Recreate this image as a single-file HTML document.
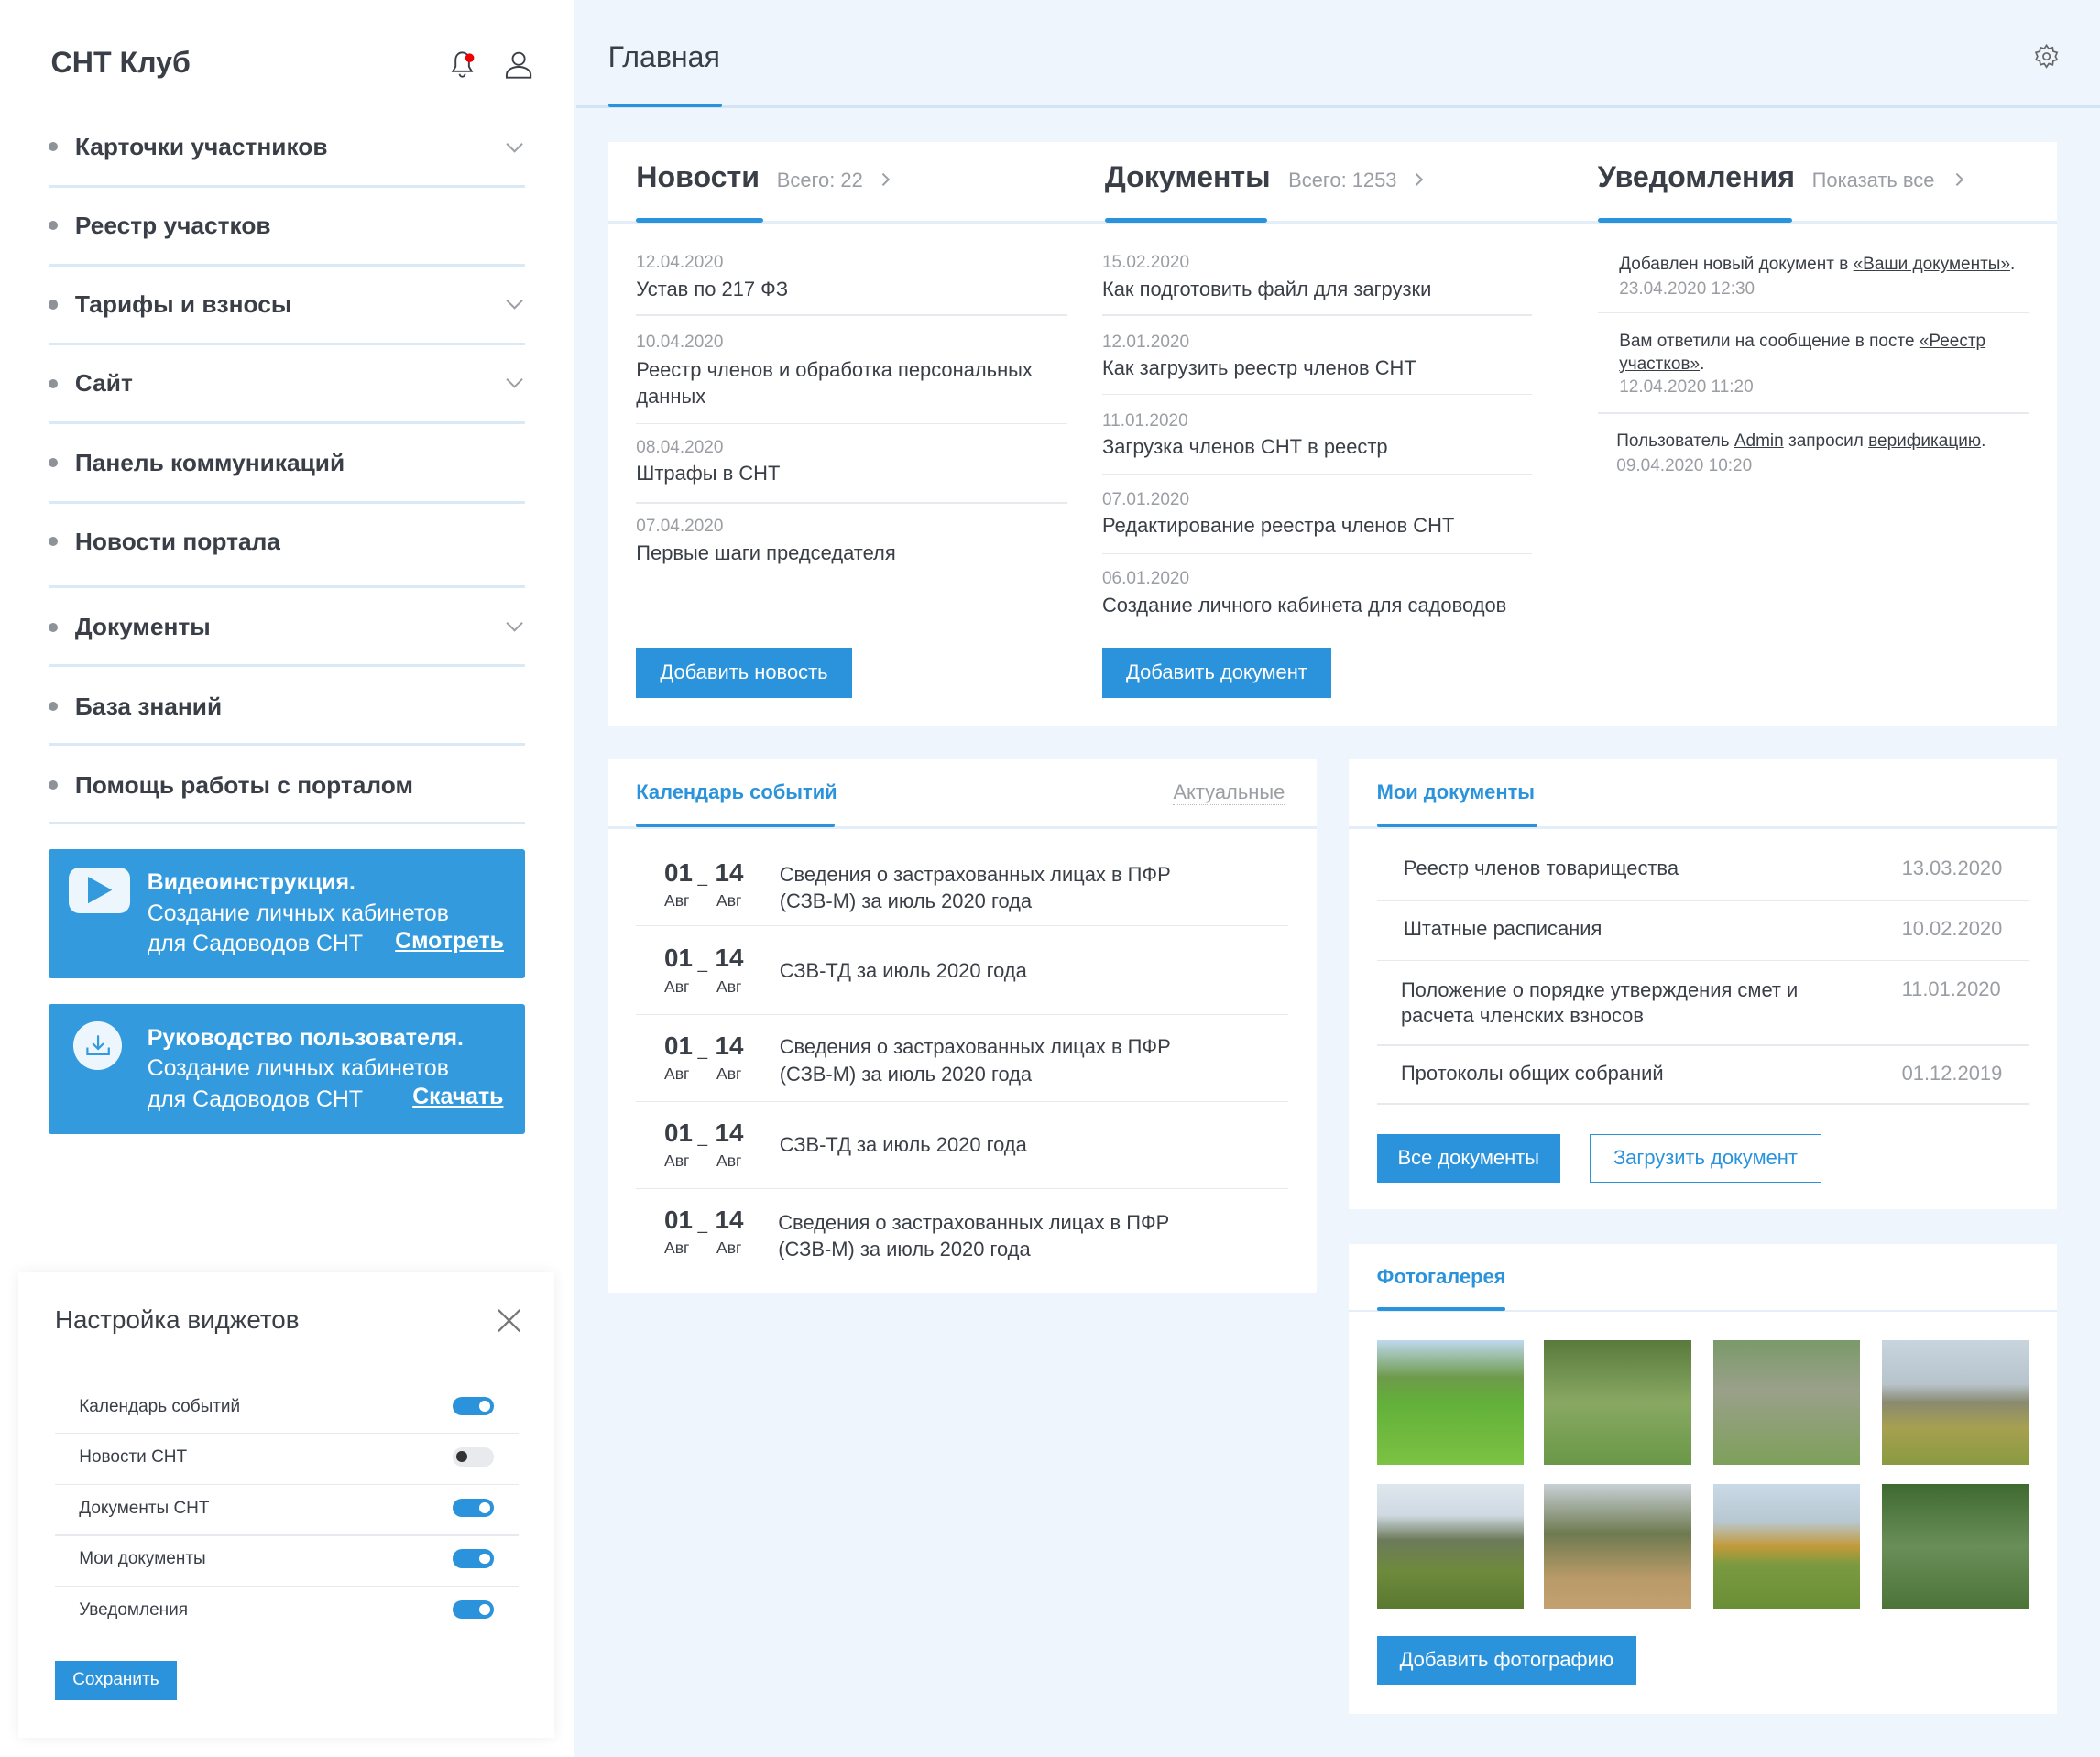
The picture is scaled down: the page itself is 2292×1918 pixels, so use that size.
<!DOCTYPE html>
<html><head><meta charset="utf-8"><style>
*{margin:0;padding:0;box-sizing:border-box}
html,body{width:2292px;height:1918px;overflow:hidden;background:#eef5fc}
#w{zoom:1.4617;width:1568px;height:1312px;position:relative;font-family:"Liberation Sans",sans-serif;color:#3a3f47}
.a{position:absolute}
.t{position:absolute;white-space:nowrap}
.card{position:absolute;background:#fff}
.hl{position:absolute;height:1px;background:#e6eaee}
.bl{position:absolute;height:2px;background:#d9e9f6}
.ul{position:absolute;height:3px;background:#2b93db;border-radius:2px}
.btn{position:absolute;background:#2b93db;color:#fff;font-size:15px;display:flex;align-items:center;justify-content:center}
.d{font-size:13px;color:#9a9ea3}
.ti{font-size:15px;color:#3a3f47}
.mi{font-size:18px;font-weight:bold;color:#3a3f47}
.dot{position:absolute;width:7px;height:7px;border-radius:50%;background:#8e9299}
.chev{position:absolute;width:9px;height:9px;border-right:1.5px solid #9aa0a6;border-bottom:1.5px solid #9aa0a6;transform:rotate(45deg)}
.gr{position:absolute;width:7px;height:7px;border-right:1.5px solid #9aa0a6;border-top:1.5px solid #9aa0a6;transform:rotate(45deg)}
.tg{position:absolute;width:31px;height:14px;border-radius:7px;background:#2b93db}
.tg::after{content:"";position:absolute;right:3px;top:3px;width:8px;height:8px;border-radius:50%;background:#fff}
.tg.off{background:#e8eaed}
.tg.off::after{left:3px;right:auto;background:#333}
u{text-decoration:underline}
.ph{position:absolute;width:110px;height:93px}
</style></head><body><div id="w">
<!-- sidebar -->
<div class="a" style="left:0;top:0;width:428px;height:1312px;background:#fff"></div>
<div class="t" style="left:38px;top:34px;font-size:22px;font-weight:bold">СНТ Клуб</div>
<svg class="a" style="left:333px;top:36px" width="24" height="24" viewBox="0 0 24 24"><path d="M12 3c-3 0-5 2.5-5 5.5v5L5 17h14l-2-3.5v-5C17 5.5 15 3 12 3zM10 19a2 2 0 0 0 4 0" fill="none" stroke="#3a3f47" stroke-width="1.3"/><circle cx="17.5" cy="7" r="3.3" fill="#e00"/></svg>
<svg class="a" style="left:376px;top:37px" width="22" height="22" viewBox="0 0 22 22"><circle cx="11" cy="7" r="4.5" fill="none" stroke="#3a3f47" stroke-width="1.3"/><path d="M2 21v-2c0-3.5 4-6 9-6s9 2.5 9 6v2z" fill="none" stroke="#3a3f47" stroke-width="1.3"/></svg>

<div class="dot" style="left:36px;top:106px"></div><div class="t mi" style="left:56px;top:99px">Карточки участников</div><div class="chev" style="left:380px;top:103px"></div><div class="bl" style="left:36px;top:138px;width:356px"></div>
<div class="dot" style="left:36px;top:165px"></div><div class="t mi" style="left:56px;top:158px">Реестр участков</div><div class="bl" style="left:36px;top:197px;width:356px"></div>
<div class="dot" style="left:36px;top:224px"></div><div class="t mi" style="left:56px;top:217px">Тарифы и взносы</div><div class="chev" style="left:380px;top:220px"></div><div class="bl" style="left:36px;top:256px;width:356px"></div>
<div class="dot" style="left:36px;top:283px"></div><div class="t mi" style="left:56px;top:276px">Сайт</div><div class="chev" style="left:380px;top:279px"></div><div class="bl" style="left:36px;top:315px;width:356px"></div>
<div class="dot" style="left:36px;top:342px"></div><div class="t mi" style="left:56px;top:335px">Панель коммуникаций</div><div class="bl" style="left:36px;top:374px;width:356px"></div>
<div class="dot" style="left:36px;top:401px"></div><div class="t mi" style="left:56px;top:394px">Новости портала</div><div class="bl" style="left:36px;top:437px;width:356px"></div>
<div class="dot" style="left:36px;top:465px"></div><div class="t mi" style="left:56px;top:458px">Документы</div><div class="chev" style="left:380px;top:461px"></div><div class="bl" style="left:36px;top:496px;width:356px"></div>
<div class="dot" style="left:36px;top:524px"></div><div class="t mi" style="left:56px;top:517px">База знаний</div><div class="bl" style="left:36px;top:555px;width:356px"></div>
<div class="dot" style="left:36px;top:583px"></div><div class="t mi" style="left:56px;top:576px">Помощь работы с порталом</div><div class="bl" style="left:36px;top:614px;width:356px"></div>

<div class="a" style="left:36px;top:634px;width:356px;height:97px;background:#339ade;border-radius:2px"></div>
<div class="a" style="left:51px;top:648px;width:46px;height:34px;background:#eef6fd;border-radius:8px"></div>
<svg class="a" style="left:66px;top:655px" width="18" height="20"><path d="M0 0L18 10L0 20z" fill="#339ade"/></svg>
<div class="t" style="left:110px;top:648px;color:#fff;font-size:17px;line-height:23px"><b>Видеоинструкция.</b><br>Создание личных кабинетов<br>для Садоводов СНТ</div>
<div class="t" style="left:295px;top:694px;color:#fff;font-size:17px;font-weight:bold"><u>Смотреть</u></div>

<div class="a" style="left:36px;top:750px;width:356px;height:97px;background:#339ade;border-radius:2px"></div>
<div class="a" style="left:55px;top:763px;width:36px;height:36px;background:#eef6fd;border-radius:50%"></div>
<svg class="a" style="left:62px;top:770px" width="22" height="22" viewBox="0 0 22 22" fill="none" stroke="#339ade" stroke-width="1.5"><path d="M11 3v10M7 9l4 4 4-4M3 12v5h16v-5"/></svg>
<div class="t" style="left:110px;top:764px;color:#fff;font-size:17px;line-height:23px"><b>Руководство пользователя.</b><br>Создание личных кабинетов<br>для Садоводов СНТ</div>
<div class="t" style="left:308px;top:810px;color:#fff;font-size:17px;font-weight:bold"><u>Скачать</u></div>

<!-- widget panel -->
<div class="a" style="left:14px;top:950px;width:400px;height:348px;background:#fff;box-shadow:0 0 10px rgba(0,0,0,.07)"></div>
<div class="t" style="left:41px;top:975px;font-size:19px">Настройка виджетов</div>
<svg class="a" style="left:370px;top:976px" width="20" height="20"><path d="M2 2L18 18M18 2L2 18" stroke="#777" stroke-width="1.5"/></svg>
<div class="t" style="left:59px;top:1043px;font-size:13px">Календарь событий</div><div class="tg" style="left:338px;top:1043px"></div><div class="hl" style="left:41px;top:1070px;width:346px"></div>
<div class="t" style="left:59px;top:1081px;font-size:13px">Новости СНТ</div><div class="tg off" style="left:338px;top:1081px"></div><div class="hl" style="left:41px;top:1108px;width:346px"></div>
<div class="t" style="left:59px;top:1119px;font-size:13px">Документы СНТ</div><div class="tg" style="left:338px;top:1119px"></div><div class="hl" style="left:41px;top:1146px;width:346px"></div>
<div class="t" style="left:59px;top:1157px;font-size:13px">Мои документы</div><div class="tg" style="left:338px;top:1157px"></div><div class="hl" style="left:41px;top:1184px;width:346px"></div>
<div class="t" style="left:59px;top:1195px;font-size:13px">Уведомления</div><div class="tg" style="left:338px;top:1195px"></div>
<div class="btn" style="left:41px;top:1240px;width:91px;height:30px;font-size:13px">Сохранить</div>

<!-- main header -->
<div class="t" style="left:454px;top:30px;font-size:22px">Главная</div>
<div class="a" style="left:430px;top:79px;width:1138px;height:2px;background:#d3e5f5"></div>
<div class="ul" style="left:454px;top:77px;width:85px"></div>
<svg class="a" style="left:1518px;top:32px" width="20" height="20" viewBox="0 0 24 24" fill="none" stroke="#666" stroke-width="1.4"><circle cx="12" cy="12" r="3"/><path d="M12 2l2 3 3.5-1 .5 3.5 3.5 1-1.5 3.5 1.5 3-3.5 1-.5 3.5-3.5-1-2 3-2-3-3.5 1-.5-3.5-3.5-1 1.5-3-1.5-3.5 3.5-1 .5-3.5 3.5 1z"/></svg>

<!-- card 1 -->
<div class="card" style="left:454px;top:106px;width:1082px;height:436px"></div>
<div class="a" style="left:454px;top:165px;width:1082px;height:2px;background:#e3eef8"></div>
<div class="t" style="left:475px;top:120px;font-size:22px;font-weight:bold">Новости</div>
<div class="t" style="left:580px;top:126px;font-size:15px;color:#9a9ea3">Всего: 22</div><div class="gr" style="left:656px;top:131px"></div>
<div class="ul" style="left:475px;top:163px;width:95px"></div>
<div class="t" style="left:825px;top:120px;font-size:22px;font-weight:bold">Документы</div>
<div class="t" style="left:962px;top:126px;font-size:15px;color:#9a9ea3">Всего: 1253</div><div class="gr" style="left:1054px;top:131px"></div>
<div class="ul" style="left:825px;top:163px;width:121px"></div>
<div class="t" style="left:1193px;top:120px;font-size:22px;font-weight:bold">Уведомления</div>
<div class="t" style="left:1353px;top:126px;font-size:15px;color:#9a9ea3">Показать все</div><div class="gr" style="left:1458px;top:131px"></div>
<div class="ul" style="left:1193px;top:163px;width:145px"></div>

<div class="t d" style="left:475px;top:189px">12.04.2020</div><div class="t ti" style="left:475px;top:207px">Устав по 217 ФЗ</div><div class="hl" style="left:475px;top:235px;width:322px"></div>
<div class="t d" style="left:475px;top:248px">10.04.2020</div><div class="t ti" style="left:475px;top:266px;line-height:20px">Реестр членов и обработка персональных<br>данных</div><div class="hl" style="left:475px;top:316px;width:322px"></div>
<div class="t d" style="left:475px;top:327px">08.04.2020</div><div class="t ti" style="left:475px;top:345px">Штрафы в СНТ</div><div class="hl" style="left:475px;top:375px;width:322px"></div>
<div class="t d" style="left:475px;top:386px">07.04.2020</div><div class="t ti" style="left:475px;top:404px">Первые шаги председателя</div>

<div class="t d" style="left:823px;top:189px">15.02.2020</div><div class="t ti" style="left:823px;top:207px">Как подготовить файл для загрузки</div><div class="hl" style="left:823px;top:235px;width:321px"></div>
<div class="t d" style="left:823px;top:248px">12.01.2020</div><div class="t ti" style="left:823px;top:266px">Как загрузить реестр членов СНТ</div><div class="hl" style="left:823px;top:294px;width:321px"></div>
<div class="t d" style="left:823px;top:307px">11.01.2020</div><div class="t ti" style="left:823px;top:325px">Загрузка членов СНТ в реестр</div><div class="hl" style="left:823px;top:354px;width:321px"></div>
<div class="t d" style="left:823px;top:366px">07.01.2020</div><div class="t ti" style="left:823px;top:384px">Редактирование реестра членов СНТ</div><div class="hl" style="left:823px;top:413px;width:321px"></div>
<div class="t d" style="left:823px;top:425px">06.01.2020</div><div class="t ti" style="left:823px;top:443px">Создание личного кабинета для садоводов</div>

<div class="t" style="left:1209px;top:189px;font-size:13px;line-height:18px">Добавлен новый документ в <u>«Ваши документы»</u>.<br><span style="color:#9a9ea3">23.04.2020 12:30</span></div><div class="hl" style="left:1193px;top:233px;width:322px"></div>
<div class="t" style="left:1209px;top:247px;font-size:13px;line-height:17px">Вам ответили на сообщение в посте <u>«Реестр</u><br><u>участков»</u>.<br><span style="color:#9a9ea3">12.04.2020 11:20</span></div><div class="hl" style="left:1193px;top:308px;width:322px"></div>
<div class="t" style="left:1207px;top:321px;font-size:13px;line-height:18px">Пользователь <u>Admin</u> запросил <u>верификацию</u>.<br><span style="color:#9a9ea3">09.04.2020 10:20</span></div>

<div class="btn" style="left:475px;top:484px;width:161px;height:37px">Добавить новость</div>
<div class="btn" style="left:823px;top:484px;width:171px;height:37px">Добавить документ</div>

<!-- calendar -->
<div class="card" style="left:454px;top:567px;width:529px;height:398px"></div>
<div class="a" style="left:454px;top:617px;width:529px;height:2px;background:#e3eef8"></div>
<div class="t" style="left:475px;top:583px;font-size:15px;color:#2b93db;font-weight:bold">Календарь событий</div>
<div class="ul" style="left:475px;top:615px;width:148px"></div>
<div class="t" style="left:876px;top:583px;font-size:15px;color:#9a9ea3;border-bottom:1px dotted #bbb">Актуальные</div>

<div class="t" style="left:496px;top:641px;font-size:19px;font-weight:bold">01</div><div class="t" style="left:534px;top:641px;font-size:19px;font-weight:bold">14</div><div class="t" style="left:521px;top:648px;font-size:13px">_</div><div class="t" style="left:496px;top:666px;font-size:12px">Авг</div><div class="t" style="left:535px;top:666px;font-size:12px">Авг</div>
<div class="t ti" style="left:582px;top:643px;line-height:20px">Сведения о застрахованных лицах в ПФР<br>(СЗВ-М) за июль 2020 года</div><div class="hl" style="left:475px;top:691px;width:487px"></div>
<div class="t" style="left:496px;top:705px;font-size:19px;font-weight:bold">01</div><div class="t" style="left:534px;top:705px;font-size:19px;font-weight:bold">14</div><div class="t" style="left:521px;top:712px;font-size:13px">_</div><div class="t" style="left:496px;top:730px;font-size:12px">Авг</div><div class="t" style="left:535px;top:730px;font-size:12px">Авг</div>
<div class="t ti" style="left:582px;top:716px">СЗВ-ТД за июль 2020 года</div><div class="hl" style="left:475px;top:757px;width:487px"></div>
<div class="t" style="left:496px;top:770px;font-size:19px;font-weight:bold">01</div><div class="t" style="left:534px;top:770px;font-size:19px;font-weight:bold">14</div><div class="t" style="left:521px;top:777px;font-size:13px">_</div><div class="t" style="left:496px;top:795px;font-size:12px">Авг</div><div class="t" style="left:535px;top:795px;font-size:12px">Авг</div>
<div class="t ti" style="left:582px;top:772px;line-height:20px">Сведения о застрахованных лицах в ПФР<br>(СЗВ-М) за июль 2020 года</div><div class="hl" style="left:475px;top:822px;width:487px"></div>
<div class="t" style="left:496px;top:835px;font-size:19px;font-weight:bold">01</div><div class="t" style="left:534px;top:835px;font-size:19px;font-weight:bold">14</div><div class="t" style="left:521px;top:842px;font-size:13px">_</div><div class="t" style="left:496px;top:860px;font-size:12px">Авг</div><div class="t" style="left:535px;top:860px;font-size:12px">Авг</div>
<div class="t ti" style="left:582px;top:846px">СЗВ-ТД за июль 2020 года</div><div class="hl" style="left:475px;top:887px;width:487px"></div>
<div class="t" style="left:496px;top:900px;font-size:19px;font-weight:bold">01</div><div class="t" style="left:534px;top:900px;font-size:19px;font-weight:bold">14</div><div class="t" style="left:521px;top:907px;font-size:13px">_</div><div class="t" style="left:496px;top:925px;font-size:12px">Авг</div><div class="t" style="left:535px;top:925px;font-size:12px">Авг</div>
<div class="t ti" style="left:581px;top:903px;line-height:20px">Сведения о застрахованных лицах в ПФР<br>(СЗВ-М) за июль 2020 года</div>

<!-- my docs -->
<div class="card" style="left:1007px;top:567px;width:529px;height:336px"></div>
<div class="a" style="left:1007px;top:617px;width:529px;height:2px;background:#e3eef8"></div>
<div class="t" style="left:1028px;top:583px;font-size:15px;color:#2b93db;font-weight:bold">Мои документы</div>
<div class="ul" style="left:1028px;top:615px;width:120px"></div>
<div class="t ti" style="left:1048px;top:640px">Реестр членов товарищества</div><div class="t" style="left:1420px;top:640px;font-size:15px;color:#9a9ea3">13.03.2020</div><div class="hl" style="left:1028px;top:672px;width:487px"></div>
<div class="t ti" style="left:1048px;top:685px">Штатные расписания</div><div class="t" style="left:1420px;top:685px;font-size:15px;color:#9a9ea3">10.02.2020</div><div class="hl" style="left:1028px;top:717px;width:487px"></div>
<div class="t ti" style="left:1046px;top:730px;line-height:19px">Положение о порядке утверждения смет и<br>расчета членских взносов</div><div class="t" style="left:1420px;top:730px;font-size:15px;color:#9a9ea3">11.01.2020</div><div class="hl" style="left:1028px;top:780px;width:487px"></div>
<div class="t ti" style="left:1046px;top:793px">Протоколы общих собраний</div><div class="t" style="left:1420px;top:793px;font-size:15px;color:#9a9ea3">01.12.2019</div><div class="hl" style="left:1028px;top:824px;width:487px"></div>
<div class="btn" style="left:1028px;top:847px;width:137px;height:36px">Все документы</div>
<div class="btn" style="left:1187px;top:847px;width:173px;height:36px;background:#fff;color:#2b93db;border:1px solid #2b93db">Загрузить документ</div>

<!-- gallery -->
<div class="card" style="left:1007px;top:929px;width:529px;height:351px"></div>
<div class="a" style="left:1007px;top:978px;width:529px;height:2px;background:#e3eef8"></div>
<div class="t" style="left:1028px;top:945px;font-size:15px;color:#2b93db;font-weight:bold">Фотогалерея</div>
<div class="ul" style="left:1028px;top:976px;width:96px"></div>
<div class="ph" style="left:1028px;top:1001px;background:linear-gradient(#bfd9ef 0%,#6e9a4a 30%,#62b03a 50%,#7cc243 100%)"></div>
<div class="ph" style="left:1153px;top:1001px;background:linear-gradient(#597a3c,#88a862 50%,#6a9848)"></div>
<div class="ph" style="left:1279px;top:1001px;background:linear-gradient(#7a9a6a,#9aa08a 40%,#7ea05a)"></div>
<div class="ph" style="left:1405px;top:1001px;background:linear-gradient(#c8d4de 0%,#b8c4cc 35%,#8a8a70 50%,#a6a050 70%,#8a9a40)"></div>
<div class="ph" style="left:1028px;top:1108px;background:linear-gradient(#dfe7ee 0%,#cfd9e2 25%,#6c7a5a 45%,#6e8a3c 70%,#5a7a30)"></div>
<div class="ph" style="left:1153px;top:1108px;background:linear-gradient(#c8d0d6,#6e7a50 40%,#b89a68 75%,#c4a070)"></div>
<div class="ph" style="left:1279px;top:1108px;background:linear-gradient(#cad9e6 0%,#b8c8d2 30%,#c29a3a 50%,#7a9a40 65%,#6a8e36)"></div>
<div class="ph" style="left:1405px;top:1108px;background:linear-gradient(#3e6a30,#6a8e58 50%,#4c7438)"></div>
<div class="btn" style="left:1028px;top:1222px;width:194px;height:36px">Добавить фотографию</div>
</div></body></html>
